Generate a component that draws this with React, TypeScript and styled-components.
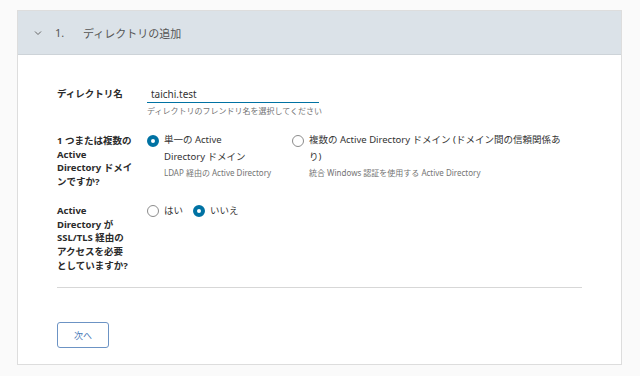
import { FC, ReactElement } from 'react';
import styled, { createGlobalStyle } from 'styled-components';

const FONT = `"Noto Sans", "Noto Sans CJK JP", sans-serif`;

const Global = createGlobalStyle`
    html, body {
        margin: 0;
        padding: 0;
        background: #fafafa;
    }
    body {
        font-family: ${FONT};
        color: #333333;
    }
`;

const App: FC = (): ReactElement => {
    return (
        <Page>
            <Global />
            <Card>
                <StepHeader>
                    <Chevron viewBox="0 0 10 10">
                        <path d="M2 3.5 L5 6.5 L8 3.5" fill="none" stroke="#666666" strokeWidth="1" />
                    </Chevron>
                    <StepNo>1.</StepNo>
                    <StepTitle>ディレクトリの追加</StepTitle>
                </StepHeader>
                <Body>
                    <Row>
                        <Label $top={2}>ディレクトリ名</Label>
                        <Field>
                            <Input defaultValue="taichi.test" />
                            <Help>ディレクトリのフレンドリ名を選択してください</Help>
                        </Field>
                    </Row>
                    <Row $gap={18}>
                        <Label>
                            1 つまたは複数の
                            <br />
                            Active
                            <br />
                            Directory ドメイ
                            <br />
                            ンですか?
                        </Label>
                        <Options>
                            <Option $width={145}>
                                <Radio $checked />
                                <OptText>
                                    <OptLabel>
                                        単一の Active
                                        <br />
                                        Directory ドメイン
                                    </OptLabel>
                                    <Help>LDAP 経由の Active Directory</Help>
                                </OptText>
                            </Option>
                            <Option $width={270}>
                                <Radio />
                                <OptText>
                                    <OptLabel>
                                        複数の Active Directory ドメイン (ドメイン間の信頼関係あ
                                        <br />
                                        り)
                                    </OptLabel>
                                    <Help>統合 Windows 認証を使用する Active Directory</Help>
                                </OptText>
                            </Option>
                        </Options>
                    </Row>
                    <Row $gap={15}>
                        <Label>
                            Active
                            <br />
                            Directory が
                            <br />
                            SSL/TLS 経由の
                            <br />
                            アクセスを必要
                            <br />
                            としていますか?
                        </Label>
                        <Inline>
                            <Choice>
                                <Radio />
                                <span>はい</span>
                            </Choice>
                            <Choice>
                                <Radio $checked />
                                <span>いいえ</span>
                            </Choice>
                        </Inline>
                    </Row>
                    <Divider />
                    <NextButton>次へ</NextButton>
                </Body>
            </Card>
        </Page>
    );
};

const Page = styled.div`
    width: 640px;
    height: 376px;
    padding: 10px 0 0 17px;
    box-sizing: border-box;
    overflow: hidden;
`;
const Card = styled.div`
    width: 605px;
    height: 355px;
    background: #ffffff;
    border: 1px solid #dddddd;
    box-sizing: border-box;
`;
const StepHeader = styled.div`
    height: 43px;
    background: #dbe2e8;
    border-bottom: 1px solid #cdd3d8;
    display: flex;
    align-items: center;
    padding-left: 15px;
    color: #565656;
`;
const Chevron = styled.svg`
    width: 10px;
    height: 10px;
    margin-right: 12px;
`;
const StepNo = styled.span`
    font-size: 11px;
    width: 28px;
`;
const StepTitle = styled.span`
    font-size: 11px;
`;
const Body = styled.div`
    padding: 30px 39px 0 39px;
`;
const Row = styled.div<{ $gap?: number }>`
    display: grid;
    grid-template-columns: 90px 1fr;
    margin-top: ${(p) => p.$gap ?? 0}px;
`;
const Label = styled.div<{ $top?: number }>`
    font-size: 9.5px;
    font-weight: 700;
    line-height: 13.7px;
    color: #2b2b2b;
    white-space: nowrap;
    padding-top: ${(p) => p.$top ?? 0}px;
`;
const Field = styled.div`
    display: flex;
    flex-direction: column;
`;
const Input = styled.input`
    width: 172px;
    height: 18px;
    border: none;
    border-bottom: 1px solid #0072a3;
    font-family: ${FONT};
    font-size: 10px;
    color: #333333;
    padding: 0 0 0 4px;
    box-sizing: border-box;
    outline: none;
    background: transparent;
`;
const Help = styled.div`
    font-size: 8px;
    color: #747474;
    margin-top: 3px;
    line-height: 10px;
    white-space: nowrap;
`;
const Options = styled.div`
    display: flex;
`;
const Option = styled.div<{ $width: number }>`
    display: flex;
    align-items: flex-start;
    width: ${(p) => p.$width}px;
`;
const Radio = styled.span<{ $checked?: boolean }>`
    flex: none;
    display: inline-block;
    width: 12px;
    height: 12px;
    border-radius: 50%;
    box-sizing: border-box;
    margin-top: 1px;
    margin-right: 5px;
    background: #ffffff;
    border: ${(p) => (p.$checked ? '4px solid #0072a3' : '1px solid #8c8c8c')};
`;
const OptText = styled.div`
    display: flex;
    flex-direction: column;
`;
const OptLabel = styled.div`
    font-size: 9.5px;
    line-height: 17px;
    margin-top: -3px;
    color: #333333;
    white-space: nowrap;
`;
const Inline = styled.div`
    display: flex;
    gap: 10px;
    align-items: flex-start;
`;
const Choice = styled.label`
    display: flex;
    align-items: flex-start;
    font-size: 9.5px;
    line-height: 14px;
    color: #333333;
`;
const Divider = styled.div`
    height: 1px;
    background: #d7d7d7;
    margin-top: 15px;
`;
const NextButton = styled.button`
    margin-top: 34px;
    width: 52px;
    height: 26px;
    border: 1px solid #6c93c4;
    border-radius: 3px;
    background: #ffffff;
    color: #4a7ab8;
    font-family: ${FONT};
    font-size: 9px;
    padding: 0;
`;

export default App;
